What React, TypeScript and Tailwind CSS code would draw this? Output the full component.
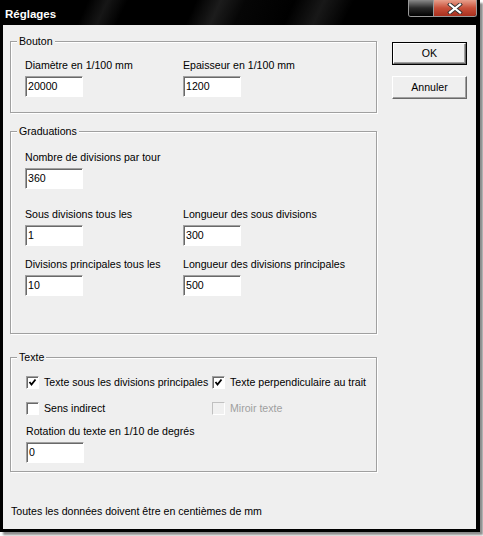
import { ReactNode } from "react";

const font = { fontFamily: '"Liberation Sans", Arial, sans-serif' };

function Group({ title, className, children }: { title: string; className: string; children: ReactNode }) {
  return (
    <div
      className={`relative border border-[#a0a0a0] shadow-[inset_1px_1px_0_#fff,1px_1px_0_#fff] ${className}`}
    >
      <span className="absolute left-[6px] top-[-7px] bg-[#efefef] px-[2px] leading-[13px]">{title}</span>
      {children}
    </div>
  );
}

function Field({ label, value }: { label: string; value: string }) {
  return (
    <div className="flex flex-col">
      <span className="leading-[13px] whitespace-nowrap">{label}</span>
      <div className="mt-[4px] flex h-[21px] w-[58px] items-center border border-t-[#a0a0a0] border-l-[#a0a0a0] border-b-white border-r-white bg-white pl-[2px] shadow-[inset_1px_1px_0_#696969]">
        {value}
      </div>
    </div>
  );
}

function Check({ label, checked, disabled }: { label: string; checked?: boolean; disabled?: boolean }) {
  return (
    <div className={`flex items-center gap-[5px] whitespace-nowrap ${disabled ? "text-[#a0a0a0]" : ""}`}>
      <div
        className={`flex h-[13px] w-[13px] shrink-0 items-center justify-center border ${
          disabled
            ? "border-t-[#c0c0c0] border-l-[#c0c0c0] border-b-white border-r-white bg-[#f0f0f0]"
            : "border-t-[#a0a0a0] border-l-[#a0a0a0] border-b-white border-r-white bg-white shadow-[inset_1px_1px_0_#696969]"
        }`}
      >
        {checked && (
          <svg width="9" height="9" viewBox="0 0 9 9">
            <path d="M1.5 4 L3.5 6.5 L7.5 1.5" stroke="#000" strokeWidth="1.8" fill="none" />
          </svg>
        )}
      </div>
      <span className="leading-[13px]">{label}</span>
    </div>
  );
}

function Button({ label, primary }: { label: string; primary?: boolean }) {
  return (
    <div className={`h-[23px] w-[75px] ${primary ? "border border-black" : ""}`}>
      <div className="flex h-full w-full items-center justify-center border border-t-white border-l-white border-b-[#696969] border-r-[#696969] shadow-[inset_-1px_-1px_0_#a0a0a0]">
        {label}
      </div>
    </div>
  );
}

export default function App() {
  return (
    <div className="h-[536px] w-[483px] bg-white text-[10.6px] text-black" style={font}>
      <div className="flex h-[532px] w-[480px] flex-col bg-black shadow-[3px_3px_2px_rgba(0,0,0,0.45)]">
        {/* title bar */}
        <div className="flex h-[25px] items-start justify-between bg-[linear-gradient(115deg,#000_0%,#000_18%,#161616_22%,#000_26%,#000_40%,#1c1c1c_45%,#060606_50%,#000_60%,#181818_66%,#000_72%,#000_100%)]">
          <span className="ml-[5px] mt-[7px] text-[11.5px] font-bold leading-[14px] text-white">Réglages</span>
          <div className="mr-[3px] flex h-[17px] overflow-hidden rounded-b-[3px] border border-t-0 border-[#9a9a9a]">
            <div className="w-[24px] bg-[linear-gradient(#8a8a8a,#2a2a2a_50%,#000)]" />
            <div className="flex w-[43px] items-center justify-center border-l border-[#9a9a9a] bg-[linear-gradient(#e8a08c,#c8503a_50%,#a8301e)]">
              <svg width="16" height="11" viewBox="0 0 16 11">
                <path d="M3 1.5 L13 9.5 M13 1.5 L3 9.5" stroke="#333" strokeWidth="4" strokeLinecap="square" />
                <path d="M3 1.5 L13 9.5 M13 1.5 L3 9.5" stroke="#fff" strokeWidth="2.2" strokeLinecap="square" />
              </svg>
            </div>
          </div>
        </div>

        {/* client area */}
        <div className="ml-[3px] mr-[4px] mb-[3px] flex flex-1 flex-col bg-[#efefef]">
          <div className="flex">
            <div className="ml-[7px] flex w-[367px] flex-col">
              <Group title="Bouton" className="mt-[16px] h-[72px] px-[14px] pt-[17px]">
                <div className="grid grid-cols-[158px_1fr]">
                  <Field label="Diamètre en 1/100 mm" value="20000" />
                  <Field label="Epaisseur en 1/100 mm" value="1200" />
                </div>
              </Group>

              <Group title="Graduations" className="mt-[18px] h-[203px] px-[14px] pt-[19px]">
                <Field label="Nombre de divisions par tour" value="360" />
                <div className="mt-[19px] grid grid-cols-[158px_1fr] gap-y-[12px]">
                  <Field label="Sous divisions tous les" value="1" />
                  <Field label="Longueur des sous divisions" value="300" />
                  <Field label="Divisions principales tous les" value="10" />
                  <Field label="Longueur des divisions principales" value="500" />
                </div>
              </Group>

              <Group title="Texte" className="mt-[23px] h-[115px] pl-[15px] pt-[18px]">
                <div className="grid grid-cols-[186px_1fr] gap-y-[13px]">
                  <Check label="Texte sous les divisions principales" checked />
                  <Check label="Texte perpendiculaire au trait" checked />
                  <Check label="Sens indirect" />
                  <Check label="Miroir texte" disabled />
                </div>
                <div className="mt-[10px]">
                  <Field label="Rotation du texte en 1/10 de degrés" value="0" />
                </div>
              </Group>
            </div>

            <div className="ml-[15px] mt-[17px] flex flex-col gap-[11px]">
              <Button label="OK" primary />
              <Button label="Annuler" />
            </div>
          </div>

          <div className="ml-[8px] mt-auto mb-[11px] leading-[13px]">
            Toutes les données doivent être en centièmes de mm
          </div>
        </div>
      </div>
    </div>
  );
}
